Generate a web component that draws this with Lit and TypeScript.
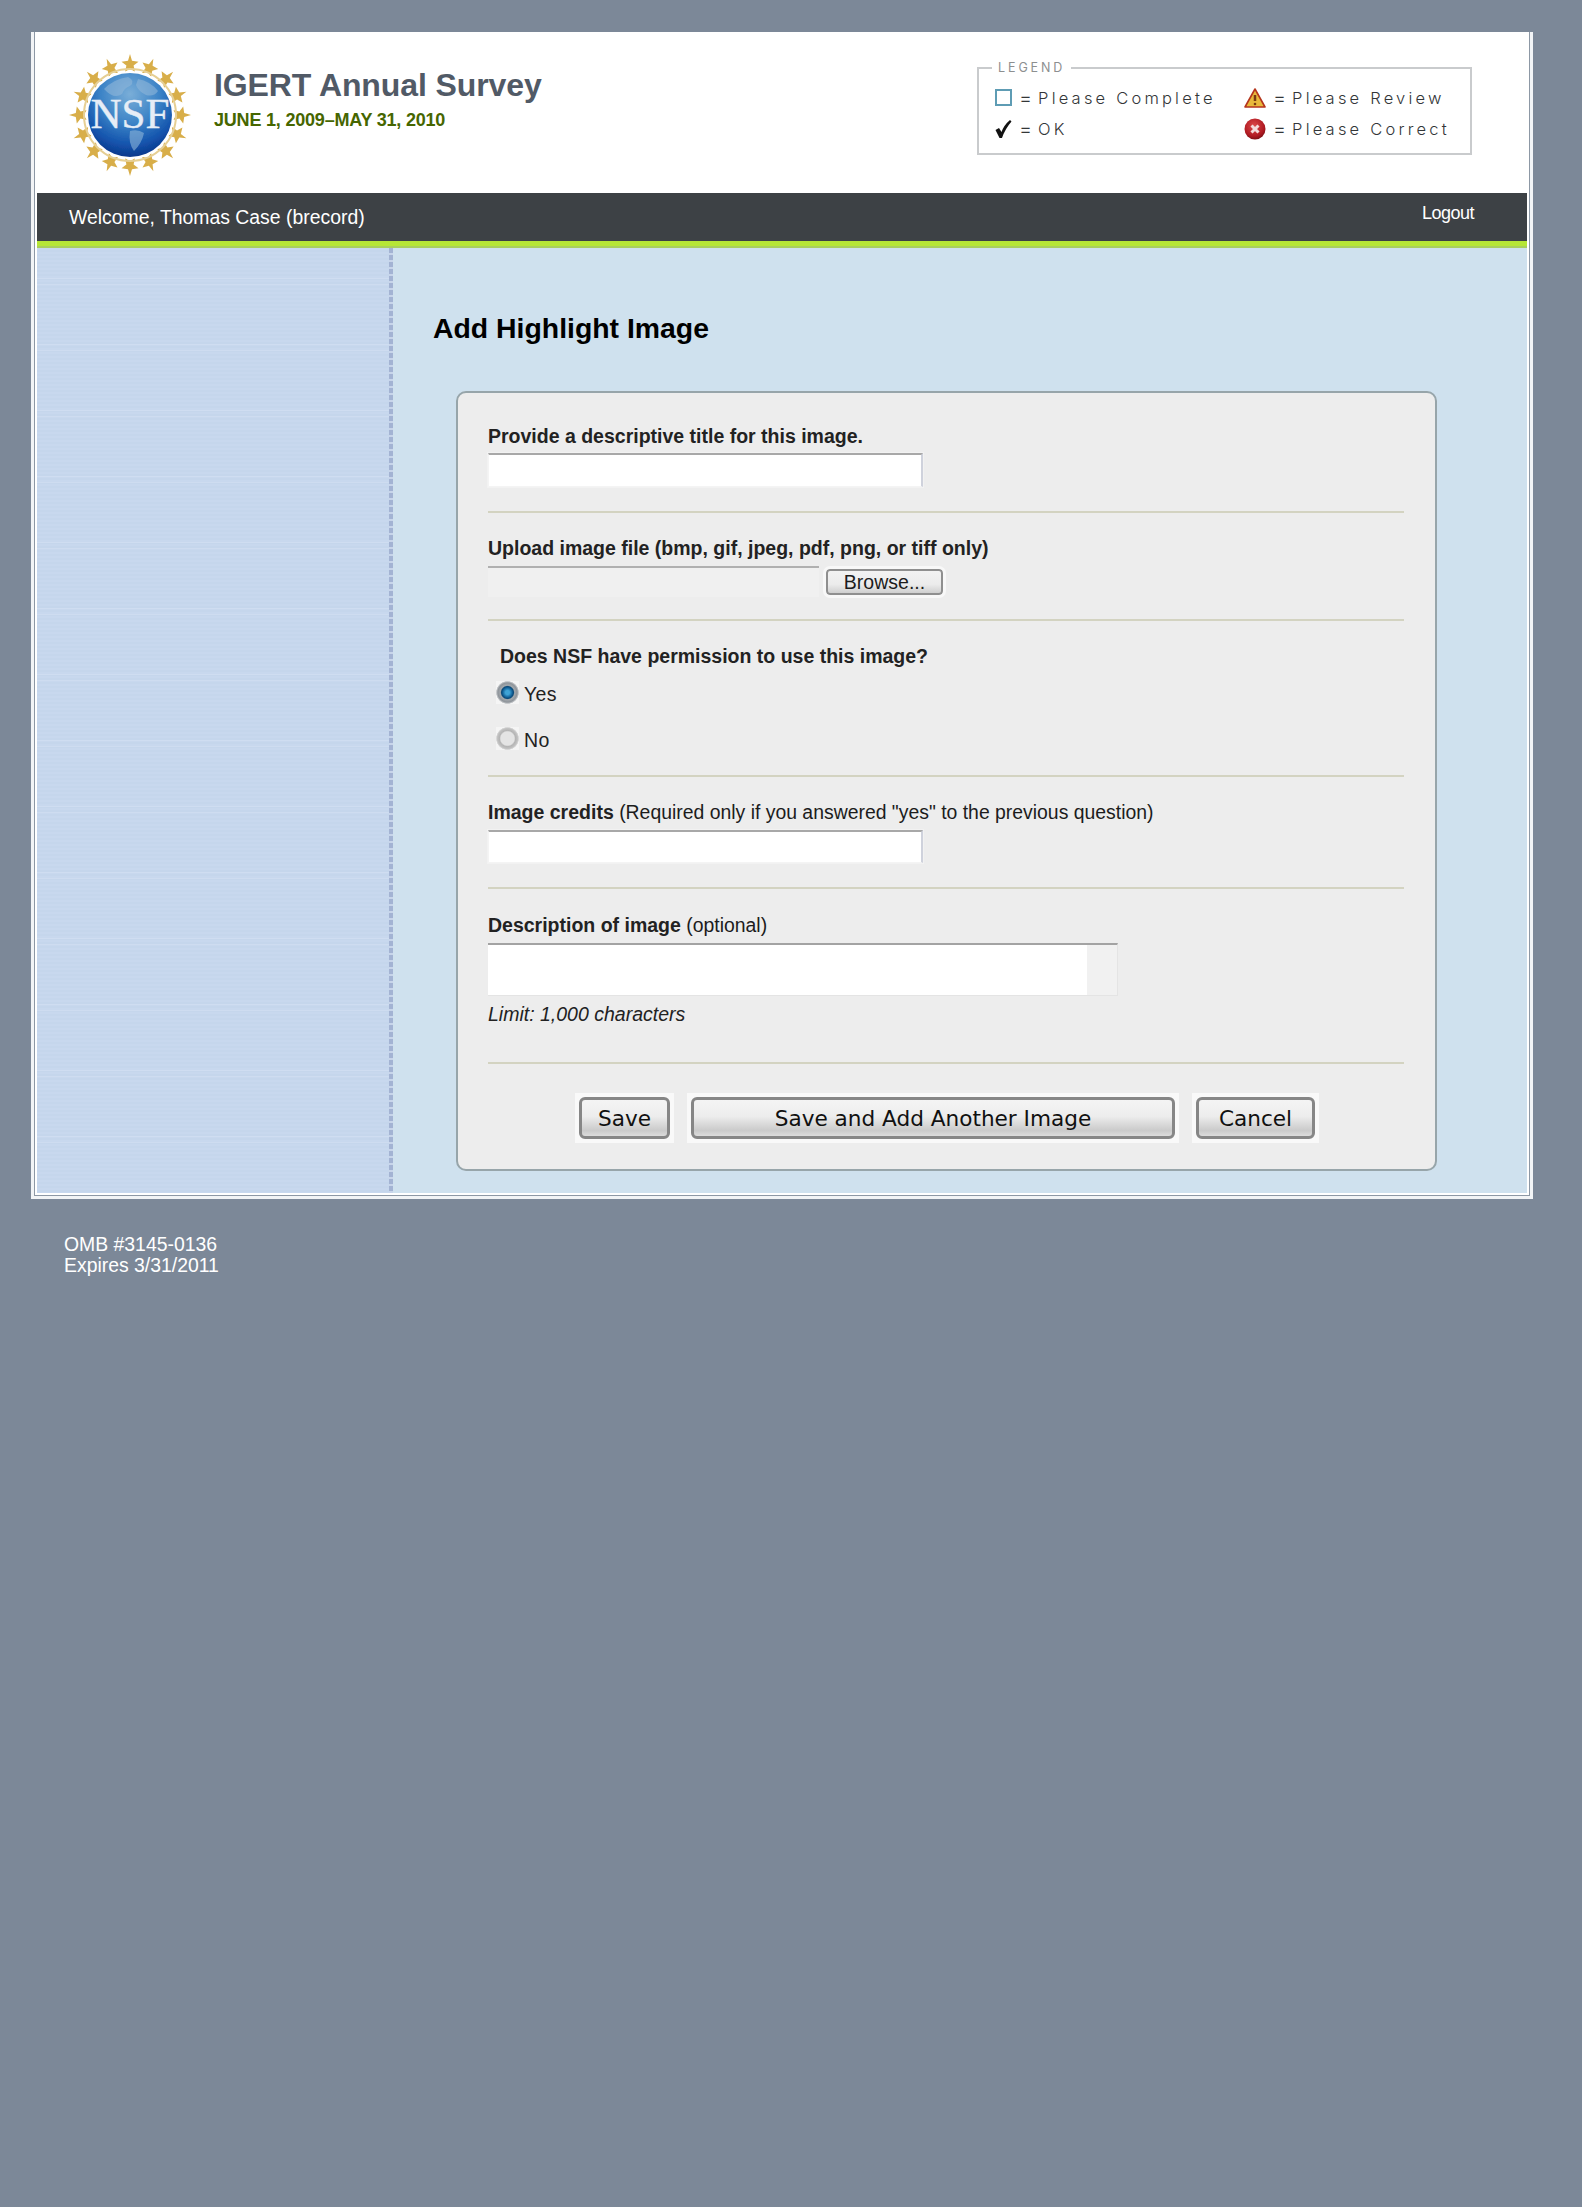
import { LitElement, html, css, svg } from "lit";
import { customElement } from "lit/decorators.js";

const star = (i: number) => {
  const a = (i * 360) / 16;
  return svg`<g transform="rotate(${a} 62 60)">
    <path d="M62 -1 L64 5.8 L70.5 6.8 L65.6 10.6 L67 17 L62 13.4 L57 17 L58.4 10.6 L53.5 6.8 L60 5.8 Z" fill="#d8ae4a"/>
  </g>`;
};

@customElement("nsf-logo")
class NsfLogo extends LitElement {
  static styles = css`
    :host { display: block; width: 124px; height: 120px; }
    svg { display: block; overflow: visible; }
  `;
  render() {
    return html`<svg width="124" height="120" viewBox="0 0 124 120">
      <defs>
        <radialGradient id="g" cx="50%" cy="25%" r="80%">
          <stop offset="0" stop-color="#7aaed8"/>
          <stop offset="0.45" stop-color="#3a82c6"/>
          <stop offset="0.75" stop-color="#1454ad"/>
          <stop offset="1" stop-color="#0a2f80"/>
        </radialGradient>
        <filter id="b" x="-10%" y="-10%" width="120%" height="120%"><feGaussianBlur stdDeviation="0.7"/></filter>
      </defs>
      <g filter="url(#b)">
        ${Array.from({ length: 16 }, (_, i) => star(i))}
        <circle cx="62" cy="60" r="46" fill="none" stroke="#e6cf94" stroke-width="2"/>
        <circle cx="62" cy="60" r="44" fill="#fff"/>
        <circle cx="62" cy="60" r="42" fill="url(#g)"/>
        <path d="M36 34 q10 -10 24 -12 q8 4 2 9 q-6 2 -8 8 q-8 6 -18 -5z M70 24 q12 2 20 12 q-4 6 -12 4 q-8 -4 -10 -10z M62 76 q8 -2 14 2 q-2 10 -10 18 q-6 -8 -4 -20z" fill="#8db5d8" opacity="0.6"/>
      </g>
      <text x="62" y="73" text-anchor="middle" font-family="Liberation Serif, serif" font-size="42" textLength="79" lengthAdjust="spacingAndGlyphs" fill="#e6edf6" stroke="#e6edf6" stroke-width="0.4">NSF</text>
    </svg>`;
  }
}

@customElement("app-root")
class AppRoot extends LitElement {
  static styles = css`
    :host { display: block; min-height: 2207px; background: #7c8898; font-family: "Liberation Sans", Arial, sans-serif; color: #1c1c1c; overflow: hidden; }
    .shell { margin: 32px 0 0 31px; width: 1502px; box-sizing: border-box; background: #fff; border: solid #f2f4f6; border-width: 0 3px 3px 3px; }
    .frame { border: solid #8d98a5; border-width: 0 1px 1px 1px; }
    .inner { border: solid #fff; border-width: 6px 2px 2px 2px; }

    .header { height: 155px; display: flex; align-items: flex-start; background: #fff; }
    .logo { margin: 17px 0 0 31px; }
    .titles { margin-left: 22px; }
    .app-title { margin: 28px 0 0; font-size: 32px; line-height: 38px; font-weight: bold; color: #515a66; letter-spacing: -0.1px; }
    .dates { margin-top: 6px; font-size: 18px; line-height: 20px; font-weight: bold; color: #466600; letter-spacing: -0.2px; }

    fieldset { margin: 23px 55px 0 auto; width: 495px; height: 94px; box-sizing: border-box; padding: 0 0 0 16px; border: solid #c9cbcd; border-width: 2px; font-family: Inter, sans-serif; color: #333638; }
    legend { padding: 0 6px; margin-left: -3px; font-size: 12.5px; line-height: 14px; letter-spacing: 2.9px; color: #8d8f90; }
    .legend-grid { display: grid; grid-template-columns: 249px 1fr; row-gap: 12px; margin-top: 13px; }
    .item { display: flex; align-items: center; height: 19px; font-size: 16.5px; font-weight: 300; letter-spacing: 3.2px; white-space: nowrap; }
    .item svg { flex: none; margin-right: 6px; }
    .eq { font-size: 20px; letter-spacing: 6px; }

    .bar { height: 48px; background: #3d4145; color: #fff; display: flex; justify-content: space-between; box-sizing: border-box; padding: 0 53px 0 32px; }
    .welcome { font-size: 19.4px; line-height: 48px; }
    .logout { font-size: 18px; line-height: 40px; letter-spacing: -0.5px; }
    .green { height: 7px; background: #b6e636; border-bottom: 2px solid #a9cf5c; box-sizing: border-box; }

    .content { display: grid; grid-template-columns: 352px 4px 1fr; height: 945px; background: #cfe1ee; }
    .sidebar { background:
      repeating-linear-gradient(180deg, transparent 0 30px, #cfddf1 30px 31px, transparent 31px 36px, #cedcf0 36px 37px, transparent 37px 66px),
      repeating-linear-gradient(180deg, #c8d8ee 0 2px, #c5d6ec 2px 4px); }
    .edge { background: repeating-linear-gradient(180deg, #a3b3d3 0 5px, #c8d5ea 5px 7px); }
    .main { padding: 65px 0 0 40px; }
    h1 { margin: 0 0 48px; font-size: 28.4px; line-height: 30px; font-weight: bold; color: #000; }

    .panel { margin-left: 23px; width: 981px; height: 780px; box-sizing: border-box; background: #ededed; border: 2px solid #97a5aa; border-radius: 10px; padding: 0 31px 0 30px; }
    .sec { border-bottom: 2px solid #d3d3c1; padding-top: 25px; padding-bottom: 24px; }
    .sec.first { padding-top: 33px; }
    .sec.s-file { padding-bottom: 22px; }
    .sec.s-desc { padding-top: 26px; padding-bottom: 38px; }
    .sec.s-perm { padding-bottom: 22px; }
    .label { font-size: 19.5px; line-height: 20px; font-weight: bold; color: #222; }
    .label span { font-weight: normal; font-size: 19.4px; color: #1c1c1c; }
    .text { display: block; box-sizing: border-box; width: 435px; height: 34px; margin-top: 7px; padding: 0; background: #fff; border: solid #f4f4f4; border-width: 2px 2px 1px 1px; border-top-color: #a8a8a8; border-right-color: #cfd2dc; outline: none; box-shadow: 0 0 0 1px #f2f2f2; }
    .text.credits { margin-top: 8px; height: 33px; }
    .file-row { display: flex; margin-top: 8px; height: 31px; }
    .file { box-sizing: border-box; width: 331px; background: #f0f0f0; border: 0; border-top: 2px solid #b0b0b0; padding: 0; outline: none; }
    .browse { margin: 3px 0 0 7px; width: 117px; height: 26px; box-sizing: border-box; padding: 0; border: 2px solid #8f8f8f; border-radius: 4px; background: linear-gradient(#f2f2f2, #ececec 60%, #cfcfcf); outline: 3px solid #f8f8f8; font: 19.5px "Liberation Sans", Arial, sans-serif; color: #1c1c1c; }

    .question { margin-left: 12px; }
    .radios { margin: 15px 0 0 8px; display: flex; flex-direction: column; gap: 20px; }
    .radio { display: flex; align-items: center; height: 26px; font-size: 19.5px; gap: 5px; color: #222; letter-spacing: 0.3px; }
    input[type="radio"] { appearance: none; margin: 0; width: 23px; height: 23px; flex: none; background: radial-gradient(closest-side, #e4e4e4 0 58%, #b4b4b4 70%, #c2c2c2 88%, #dedede 98%, #f5f5f5 100%); position: relative; top: -2px; }
    input[type="radio"]:checked { background: radial-gradient(closest-side, #3ea3d6 0 18%, #0f5c92 44%, #0b4a78 52%, #a4a9ad 62%, #8e949a 84%, #d2d4d6 98%, #f5f5f5 100%); }

    .ta-row { display: flex; width: 630px; height: 53px; margin-top: 8px; box-sizing: border-box; border-top: 2px solid #a3a3a3; border-bottom: 1px solid #e4e4e4; border-right: 1px solid #e4e4e4; }
    textarea { flex: 1; min-width: 0; box-sizing: border-box; border: 0; padding: 0; margin: 0; background: #fff; resize: none; outline: none; }
    .scroll { width: 30px; background: #f1f1f1; }
    .limit { margin-top: 8px; font-size: 19.5px; line-height: 20px; font-style: italic; color: #222; }

    .actions { display: flex; justify-content: center; gap: 13px; padding: 29px 0 0 2px; }
    .halo { display: flex; padding: 4px; background: #f9f9f9; }
    .btn { height: 42px; box-sizing: border-box; padding: 0; border: 3px solid #868686; border-radius: 6px; background: linear-gradient(#f4f4f4, #ededed 45%, #cacaca 85%, #dcdcdc); font: 21.6px "DejaVu Sans", Verdana, sans-serif; color: #111; }
    .b-save { width: 91px; }
    .b-another { width: 484px; }
    .b-cancel { width: 119px; }

    .footer { padding: 35px 0 0 64px; color: #fff; font-size: 19.4px; line-height: 21px; }
  `;

  render() {
    return html`
      <div class="shell"><div class="frame"><div class="inner">
        <div class="header">
          <nsf-logo class="logo"></nsf-logo>
          <div class="titles">
            <div class="app-title">IGERT Annual Survey</div>
            <div class="dates">JUNE 1, 2009–MAY 31, 2010</div>
          </div>
          <fieldset>
            <legend>LEGEND</legend>
            <div class="legend-grid">
              <div class="item"><svg width="18" height="18" viewBox="0 0 18 18"><rect x="1" y="1" width="15" height="15" fill="#fff" stroke="#5e9cb4" stroke-width="2"/></svg><span class="eq">=</span>Please Complete</div>
              <div class="item"><svg width="22" height="20" viewBox="0 0 22 20" style="margin-right:7px"><path d="M11 1 L21 19 H1 Z" fill="#e8b83a" stroke="#b5351c" stroke-width="1.6" stroke-linejoin="round"/><path d="M11 7 V13" stroke="#7a3a12" stroke-width="2.5"/><circle cx="11" cy="16" r="1.3" fill="#7a3a12"/></svg><span class="eq">=</span>Please Review</div>
              <div class="item"><svg width="18" height="20" viewBox="0 0 18 20"><path d="M0.5 11 L4 9 L6.5 13 Q9 6 15 1 L16.5 2.5 Q10 10 7 19 L4.5 19 Z" fill="#111"/></svg><span class="eq">=</span>OK</div>
              <div class="item"><svg width="22" height="22" viewBox="0 0 22 22" style="margin-right:7px"><defs><radialGradient id="red" cx="45%" cy="35%" r="70%"><stop offset="0" stop-color="#dc4a4a"/><stop offset="0.7" stop-color="#b01a22"/><stop offset="1" stop-color="#6e0d12"/></radialGradient></defs><circle cx="11" cy="11" r="10.5" fill="url(#red)"/><path d="M7.5 7.5 L14.5 14.5 M14.5 7.5 L7.5 14.5" stroke="#f3dcdc" stroke-width="3"/></svg><span class="eq">=</span>Please Correct</div>
            </div>
          </fieldset>
        </div>
        <div class="bar">
          <div class="welcome">Welcome, Thomas Case (brecord)</div>
          <div class="logout">Logout</div>
        </div>
        <div class="green"></div>
        <div class="content">
          <div class="sidebar"></div>
          <div class="edge"></div>
          <div class="main">
            <h1>Add Highlight Image</h1>
            <div class="panel">
              <div class="sec first">
                <div class="label">Provide a descriptive title for this image.</div>
                <input class="text" type="text" />
              </div>
              <div class="sec s-file">
                <div class="label">Upload image file (bmp, gif, jpeg, pdf, png, or tiff only)</div>
                <div class="file-row">
                  <input class="file" type="text" />
                  <button class="browse">Browse...</button>
                </div>
              </div>
              <div class="sec s-perm">
                <div class="label question">Does NSF have permission to use this image?</div>
                <div class="radios">
                  <label class="radio"><input type="radio" name="perm" checked />Yes</label>
                  <label class="radio"><input type="radio" name="perm" />No</label>
                </div>
              </div>
              <div class="sec">
                <div class="label">Image credits <span>(Required only if you answered "yes" to the previous question)</span></div>
                <input class="text credits" type="text" />
              </div>
              <div class="sec s-desc">
                <div class="label">Description of image <span>(optional)</span></div>
                <div class="ta-row"><textarea></textarea><div class="scroll"></div></div>
                <div class="limit">Limit: 1,000 characters</div>
              </div>
              <div class="actions">
                <div class="halo"><button class="btn b-save">Save</button></div>
                <div class="halo"><button class="btn b-another">Save and Add Another Image</button></div>
                <div class="halo"><button class="btn b-cancel">Cancel</button></div>
              </div>
            </div>
          </div>
        </div>
      </div></div></div>
      <div class="footer">OMB #3145-0136<br />Expires 3/31/2011</div>
    `;
  }
}
